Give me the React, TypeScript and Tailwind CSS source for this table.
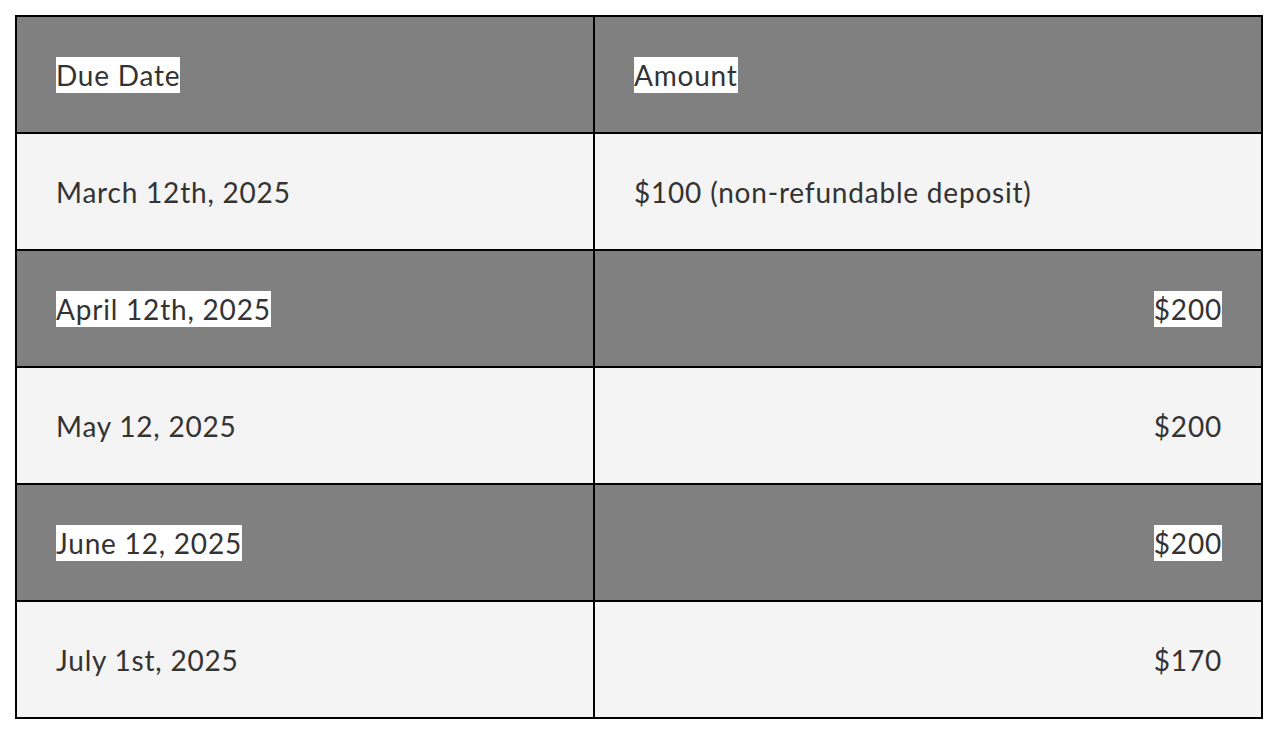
import React from "react";

const rows: { date: string; amount: string; dark: boolean; right: boolean }[] = [
  { date: "Due Date", amount: "Amount", dark: true, right: false },
  { date: "March 12th, 2025", amount: "$100 (non-refundable deposit)", dark: false, right: false },
  { date: "April 12th, 2025", amount: "$200", dark: true, right: true },
  { date: "May 12, 2025", amount: "$200", dark: false, right: true },
  { date: "June 12, 2025", amount: "$200", dark: true, right: true },
  { date: "July 1st, 2025", amount: "$170", dark: false, right: true },
];

function Cell({ text, dark, right, first }: { text: string; dark: boolean; right: boolean; first: boolean }) {
  return (
    <td
      className={
        "border-2 border-black px-[39px] align-middle h-[117px] " +
        (dark ? "bg-[#808080] " : "bg-[#f4f4f4] ") +
        (right ? "text-right " : "text-left ") +
        (first ? "w-[578px]" : "")
      }
    >
      <span className={(dark ? "bg-white " : "") + "py-[1px] text-[#333333]"}>{text}</span>
    </td>
  );
}

export default function App() {
  return (
    <div className="min-h-screen bg-white p-[15px]" style={{ fontFamily: "Lato, 'Noto Sans', sans-serif" }}>
      <table className="w-[1248px] border-collapse border-2 border-black text-[28px] leading-[30px] tracking-[0.8px]">
        <tbody>
          {rows.map((r, i) => (
            <tr key={i}>
              <Cell text={r.date} dark={r.dark} right={false} first />
              <Cell text={r.amount} dark={r.dark} right={r.right} first={false} />
            </tr>
          ))}
        </tbody>
      </table>
    </div>
  );
}
